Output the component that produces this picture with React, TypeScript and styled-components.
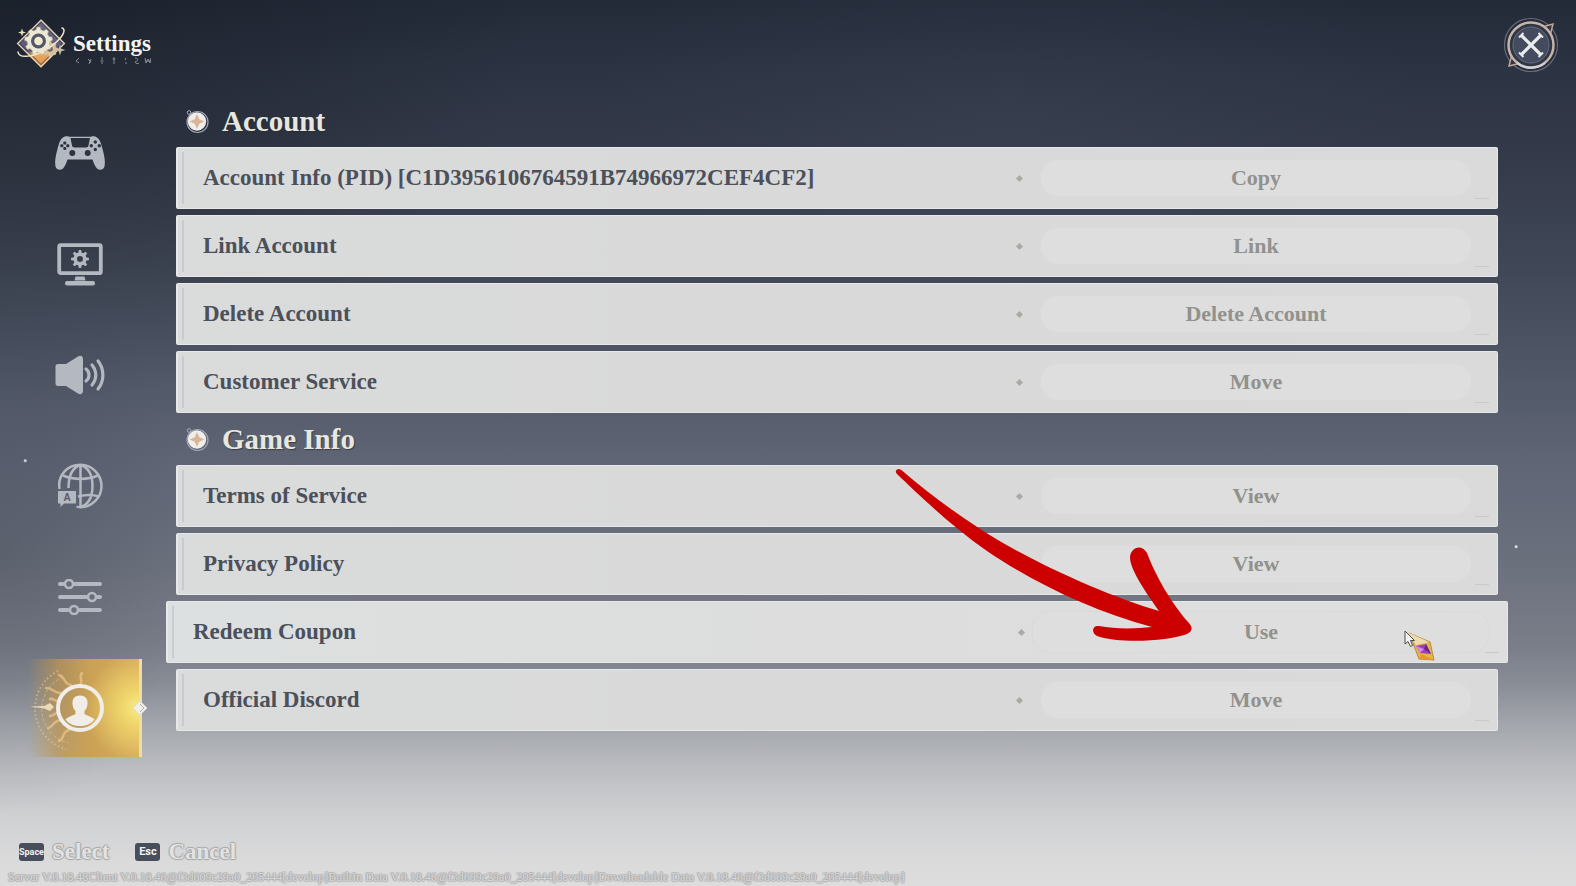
import React, { useState } from 'react';
import styled, { createGlobalStyle, css } from 'styled-components';

const serif = '"Liberation Serif", "Times New Roman", serif';

const GlobalStyle = createGlobalStyle`
  *, *::before, *::after { box-sizing: border-box; }
  body { margin: 0; font-family: ${serif}; }
  button { font: inherit; color: inherit; background: none; border: 0; padding: 0; cursor: pointer; }
  h1, h2, p { margin: 0; }
`;

const Page = styled.div`
  position: relative;
  min-height: 100vh;
  display: flex;
  flex-direction: column;
  overflow: hidden;
  background:
    radial-gradient(circle at 1.6% 52%, #c9ccd0 0, #c9ccd0 1px, rgba(201, 204, 208, 0) 2px),
    radial-gradient(circle at 96.2% 61.7%, #d5d7da 0, #d5d7da 1px, rgba(213, 215, 218, 0) 2px),
    radial-gradient(ellipse 34% 46% at 0% 0%, rgba(16, 20, 26, 0.42), rgba(16, 20, 26, 0)),
    radial-gradient(ellipse 26% 22% at 64% 12%, rgba(96, 108, 130, 0.12), rgba(96, 108, 130, 0)),
    radial-gradient(ellipse 12% 30% at 0% 62%, rgba(50, 54, 66, 0.25), rgba(50, 54, 66, 0)),
    linear-gradient(180deg, #232a38 0%, #2c3342 8%, #343a49 18%, #414857 31%, #505767 42%, #5f6575 52%, #6c717e 64%, #7a7e89 73%, #888c95 77%, #a4a7ad 82%, #bcbec2 87%, #ced0d2 92%, #dadadb 97%, #dddddd 100%);
`;

const Header = styled.header`
  display: flex;
  align-items: center;
  justify-content: space-between;
  height: 90px;
  padding: 0 16px;
`;

const Brand = styled.div`
  display: flex;
  align-items: center;
  gap: 7px;
  padding-bottom: 4px;
`;

const TitleBlock = styled.div`
  display: flex;
  flex-direction: column;
  gap: 1px;
  padding-top: 10px;
`;

const Title = styled.h1`
  font-size: 23px;
  line-height: 24px;
  font-weight: 700;
  color: #f4f4f2;
`;

const CloseButton = styled.button`
  display: block;
  width: 58px;
  height: 58px;
`;

const Body = styled.div`
  display: flex;
  padding-top: 5px;
`;

const Nav = styled.nav`
  flex: none;
  display: flex;
  flex-direction: column;
  gap: 13px;
  width: 176px;
  padding: 9px 0 0 18px;
`;

const NavButton = styled.button<{ $active?: boolean }>`
  position: relative;
  display: flex;
  align-items: center;
  justify-content: center;
  width: 124px;
  height: 98px;
  color: #b4b8c1;
  ${({ $active }) =>
    $active &&
    css`
      color: #f1eee9;
      border-right: 3px solid #f0dca6;
      padding-left: 3px;
      background:
        radial-gradient(circle at 100% 50%, #f6ee84 0%, rgba(245, 222, 110, 0.8) 14%, rgba(240, 205, 100, 0) 42%),
        linear-gradient(90deg, rgba(190, 150, 80, 0) 8%, rgba(190, 150, 80, 0.75) 34%, #cba155 60%, #d6ab5c 100%);
    `}
`;

const ActiveArt = styled.svg`
  position: absolute;
  left: 12px;
  top: 4px;
  width: 90px;
  height: 90px;
`;

const ActiveMarker = styled.svg`
  position: absolute;
  right: -9px;
  top: 41px;
  width: 16px;
  height: 16px;
`;

const Icon = styled.svg`
  position: relative;
  display: block;
`;

const Main = styled.main`
  flex: 1;
  min-width: 0;
  padding-right: 78px;
`;

const SectionHeading = styled.h2`
  display: flex;
  align-items: center;
  gap: 12px;
  height: 52px;
  padding-left: 9px;
  font-size: 29px;
  line-height: 32px;
  font-weight: 700;
  color: #e6e7df;
  text-shadow: 1px 1px 1px rgba(40, 44, 52, 0.7);
`;

const Rows = styled.div`
  display: flex;
  flex-direction: column;
  gap: 6px;
`;

const Row = styled.div<{ $active?: boolean }>`
  position: relative;
  display: flex;
  align-items: center;
  gap: ${({ $active }) => ($active ? 8 : 18)}px;
  height: 62px;
  margin: 0 ${({ $active }) => ($active ? -10 : 0)}px;
  padding: 0 ${({ $active }) => ($active ? 17 : 25)}px 0 25px;
  border: 1px solid #e6e8ea;
  border-left-width: 2px;
  border-radius: 2px;
  background: ${({ $active }) =>
    $active
      ? 'linear-gradient(90deg, #dde0e0, #dcdddc 50%, #dedede)'
      : 'linear-gradient(90deg, #dadbdb, #d8d9d8 50%, #dadada)'};

  &::before {
    content: '';
    position: absolute;
    left: 4px;
    top: 4px;
    bottom: 4px;
    width: 2px;
    background: #c9cbd2;
  }

  &::after {
    content: '';
    position: absolute;
    right: 8px;
    bottom: 9px;
    width: 14px;
    height: 1px;
    background: #c9c9c7;
  }
`;

const RowLabel = styled.span`
  flex: 1;
  min-width: 0;
  font-size: 23px;
  line-height: 28px;
  font-weight: 700;
  color: #4b505b;
  white-space: nowrap;
`;

const Dot = styled.i`
  flex: none;
  width: 5px;
  height: 5px;
  background: #aaaaa5;
  transform: rotate(45deg);
`;

const ActionButton = styled.button<{ $active?: boolean }>`
  flex: none;
  width: ${({ $active }) => ($active ? 458 : 432)}px;
  height: ${({ $active }) => ($active ? 42 : 38)}px;
  border: 1px solid #d9dad9;
  border-radius: 18px;
  background: #dedede;
  font-size: 22px;
  line-height: 26px;
  font-weight: 700;
  color: #91918d;
`;

const Arrow = styled.svg`
  position: absolute;
  right: 312px;
  top: -136px;
  width: 304px;
  height: 180px;
  z-index: 2;
  pointer-events: none;
`;

const Cursor = styled.svg`
  position: absolute;
  right: 70px;
  top: 27px;
  width: 34px;
  height: 34px;
  z-index: 2;
  pointer-events: none;
`;

const Footer = styled.footer`
  margin-top: auto;
  padding: 0 8px 1px;
`;

const Hints = styled.div`
  display: flex;
  gap: 26px;
  padding: 0 11px;
`;

const Hint = styled.button`
  display: flex;
  align-items: center;
  gap: 8px;
  font-size: 23px;
  line-height: 26px;
  font-weight: 700;
  color: #e2e2e2;
  text-shadow: 1px 0 1px #a6a6a6, -1px 0 1px #a6a6a6, 0 1px 1px #a6a6a6, 0 -1px 1px #a6a6a6;
`;

const Key = styled.kbd<{ $long?: boolean }>`
  display: flex;
  align-items: center;
  justify-content: center;
  width: 25px;
  height: 18px;
  border-radius: 3px;
  background: #484e5b;
  color: #f3f3f3;
  font: 700 ${({ $long }) => ($long ? 9 : 11)}px/18px Roboto, Arial, sans-serif;
  text-shadow: none;
`;

const Version = styled.p`
  padding-top: 4px;
  font-size: 12px;
  line-height: 16px;
  color: #d8d8d8;
  white-space: nowrap;
  text-shadow: 1px 0 1px #ababab, -1px 0 1px #ababab, 0 1px 1px #ababab, 0 -1px 1px #ababab;
`;

const gearPath = (cx: number, cy: number, outer: number, inner: number, teeth: number) => {
  const step = (Math.PI * 2) / teeth;
  const at = (r: number, a: number) => `${(cx + r * Math.sin(a)).toFixed(2)} ${(cy - r * Math.cos(a)).toFixed(2)}`;
  let d = '';
  for (let i = 0; i < teeth; i++) {
    const a = i * step;
    d += `${i ? 'L' : 'M'}${at(inner, a - step * 0.3)}L${at(outer, a - step * 0.17)}L${at(outer, a + step * 0.17)}L${at(inner, a + step * 0.3)}`;
  }
  return d + 'Z';
};

const Emblem = () => (
  <svg width="50" height="50" viewBox="0 0 50 50" aria-hidden="true">
    <defs>
      <linearGradient id="emblem" x1="0" y1="0" x2="0" y2="1">
        <stop offset="0" stopColor="#6b6d82" />
        <stop offset="0.66" stopColor="#57597a" />
        <stop offset="0.72" stopColor="#e9a85e" />
        <stop offset="1" stopColor="#d9964d" />
      </linearGradient>
    </defs>
    <path d="M25 2 48.500 25.500 25 49 1.500 25.500Z" fill="url(#emblem)" stroke="#e8d7b6" strokeWidth="1.200" />
    <path d="M25 4.500 46 25.500 25 46.500 4 25.500Z" fill="none" stroke="#3a3444" strokeWidth="0.800" />
    <path d={gearPath(34, 31, 8, 6.4, 8)} fill="#d9c19a" />
    <circle cx="34" cy="31" r="2.800" fill="#6d6570" />
    <path d={gearPath(22.5, 23, 14, 11.4, 9)} fill="#ece8d6" stroke="#b7a98c" strokeWidth="0.600" />
    <circle cx="22.500" cy="23" r="7.500" fill="#55576b" />
    <circle cx="22.500" cy="23" r="4.300" fill="#efebcd" />
    <path d="M2 34C3 41 18 39 31 31S52 12 46 10" fill="none" stroke="#ede2c8" strokeWidth="1.500" strokeLinecap="round" />
    <path d="M6 10.500 7 13.500 10 14.500 7 15.500 6 18.500 5 15.500 2 14.500 5 13.500Z" fill="#eadfb9" />
    <path d="M44 26.500 45.300 30.700 49.500 32 45.300 33.300 44 37.500 42.700 33.300 38.500 32 42.700 30.700Z" fill="#c9bda4" />
  </svg>
);

const Runes = () => (
  <svg width="78" height="8" viewBox="0 0 78 8" fill="none" stroke="#868a94" strokeWidth="1" aria-hidden="true">
    <path d="M6 1 3 4 6 6M15 2l2 2-1 3M18 2l-1 4M29 0v3M29 5v2M27.500 4h3M41 0v7M39.500 2h3M53 1l-1 2M53 5v2M62 1c4 0 3 3 0 4 1 2 3 2 4 1M72 1l1 5 2-4 2 4 1-5M72 4h6" />
  </svg>
);

const CloseIcon = () => (
  <svg width="58" height="58" viewBox="0 0 58 58" aria-hidden="true">
    <circle cx="29" cy="29" r="26.500" fill="#232936" fillOpacity="0.500" stroke="#6b6a76" strokeWidth="1.200" />
    <path d="M40 11 51 8 48 20ZM7 50 10 38 19 47Z" fill="#3a3440" stroke="#b9a79c" strokeWidth="1.500" />
    <circle cx="29" cy="29" r="22.500" fill="#2f3644" stroke="#c4b4aa" strokeWidth="2.500" />
    <path d="M15 47A22.500 22.500 0 0 0 43 47" fill="none" stroke="#cfd4dc" strokeWidth="2.200" />
    <circle cx="29" cy="29" r="18" fill="#444b5e" stroke="#666c7d" strokeWidth="1" />
    <path d="M19 19 39 39M39 19 19 39" stroke="#e9ecec" strokeWidth="3.200" />
    <path d="M17 21.500 21.500 17M36.500 17 41 21.500M17 36.500 21.500 41M41 36.500 36.500 41" stroke="#e9ecec" strokeWidth="2" />
  </svg>
);

const SectionIcon = () => (
  <svg width="25" height="26" viewBox="0 0 25 26" aria-hidden="true">
    <circle cx="12.500" cy="14" r="10.500" fill="none" stroke="#9fa5b2" strokeWidth="1.200" />
    <circle cx="12" cy="13.500" r="9.200" fill="#f0eeea" />
    <path d="M12 6 14.200 11.300 19.500 13.500 14.200 15.700 12 21 9.800 15.700 4.500 13.500 9.800 11.300Z" fill="#d8b498" />
    <circle cx="4" cy="4.500" r="1.800" fill="none" stroke="#a9adb8" />
  </svg>
);

const ControllerIcon = () => (
  <Icon width="52" height="36" viewBox="0 0 52 36" aria-hidden="true">
    <path
      fill="currentColor"
      fillRule="evenodd"
      d="M9 2.500C11 1 13.500 1 15 1.700H37C38.500 1 41 1 43 2.500 45.500 4 47 8 48.500 14 50.500 21 51.500 27 50.500 31.500 49.500 35 46 35.500 43.500 34 41 31.500 39.500 27.500 38.500 24.500H13.500C12.500 27.500 11 31.500 8.500 34 6 35.500 2.500 35 1.500 31.500 0.500 27 1.500 21 3.500 14 5 8 6.500 4 9 2.500ZM16.500 3 18 10.500C18.300 11.800 19 12.500 20.500 12.500H32C33.500 12.500 34.200 11.800 34.500 10.500L36 3Z"
    />
    <g fill="#2d3442">
      <circle cx="18.300" cy="18" r="3" />
      <circle cx="33.700" cy="18" r="3" />
      <rect x="9.300" y="6.500" width="3" height="3" rx="1" />
      <rect x="9.300" y="12" width="3" height="3" rx="1" />
      <rect x="6.300" y="9.300" width="3" height="3" rx="1" />
      <rect x="12.300" y="9.300" width="3" height="3" rx="1" />
      <circle cx="41.300" cy="7" r="1.700" />
      <circle cx="41.300" cy="14.500" r="1.700" />
      <circle cx="37.300" cy="10.800" r="1.700" />
      <circle cx="45.300" cy="10.800" r="1.700" />
    </g>
  </Icon>
);

const DisplayIcon = () => (
  <Icon width="46" height="44" viewBox="0 0 46 44" aria-hidden="true">
    <rect x="2.200" y="3.200" width="41.600" height="28" rx="1.500" fill="none" stroke="currentColor" strokeWidth="3.800" />
    <path d="M18.500 34.500h9l1 4h-11Z" fill="currentColor" />
    <rect x="8" y="39" width="30" height="4.500" rx="2" fill="currentColor" />
    <path fill="currentColor" fillRule="evenodd" d={`${gearPath(23, 17, 9, 6.6, 8)}M26 17a3 3 0 1 0-6 0 3 3 0 0 0 6 0Z`} />
  </Icon>
);

const SoundIcon = () => (
  <Icon width="50" height="40" viewBox="0 0 50 40" aria-hidden="true">
    <path d="M3 9H11L23 1.500C25.500 0 28 1 28 4V36C28 39 25.500 40 23 38.500L11 31H3C1.500 31 .5 30 .5 28.500V11.500C.5 10 1.500 9 3 9Z" fill="currentColor" />
    <g fill="none" stroke="currentColor" strokeWidth="3.200" strokeLinecap="round">
      <path d="M31 14C35 17 35 23 31 26" />
      <path d="M37 10C42 16 42 24 37 30" />
      <path d="M43 6C49.500 14 49.500 26 43 34" />
    </g>
  </Icon>
);

const LanguageLetter = styled.text`
  font: 700 10px "Liberation Sans", Arial, sans-serif;
`;

const LanguageIcon = () => (
  <Icon width="46" height="46" viewBox="0 0 46 46" aria-hidden="true">
    <g fill="none" stroke="currentColor" strokeWidth="2.500">
      <path d="M2.600 26C0 12 11 1.800 23.500 1.800 35 1.800 44.500 11.500 44.500 23S35 44.200 23.500 44.200C22 44.200 20.500 44 19.500 43.500" />
      <path d="M23.500 2V44M23.500 2C33 5 35.500 14 35.500 23S33 41 23.500 44M23.500 2C14 5 11.500 14 11.500 25M6 12.500C16 17 31 17 41 12.500M21 33.500C29 31.500 36 31.500 42 33.500" />
    </g>
    <path d="M1 28H19V40.500H7L3.500 44V40.500H1Z" fill="currentColor" />
    <LanguageLetter x="10" y="38" textAnchor="middle" fill="#565d6a">A</LanguageLetter>
  </Icon>
);

const OptionsIcon = () => (
  <Icon width="44" height="36" viewBox="0 0 44 36" fill="none" stroke="currentColor" aria-hidden="true">
    <g strokeWidth="4" strokeLinecap="round">
      <path d="M2 5H5M17 5H42M2 18H28M40 18H42M2 31H10M22 31H42" />
    </g>
    <g strokeWidth="2.600">
      <circle cx="11" cy="5" r="4" />
      <circle cx="34" cy="18" r="4" />
      <circle cx="16" cy="31" r="4" />
    </g>
  </Icon>
);

const AccountIcon = () => (
  <Icon width="50" height="50" viewBox="0 0 50 50" aria-hidden="true">
    <circle cx="25" cy="25" r="22" fill="none" stroke="currentColor" strokeWidth="4" />
    <path d="M25 12.500C30.500 12.500 33 16 32.500 21 32.200 24.500 31 26.500 29.500 28V31C32.500 33 37 33.500 39.500 36.500 35.500 41.500 30.500 43 25 43S14.500 41.500 10.500 36.500C13 33.500 17.500 33 20.500 31V28C19 26.500 17.800 24.500 17.500 21 17 16 19.500 12.500 25 12.500Z" fill="currentColor" />
  </Icon>
);

const SunArt = () => (
  <ActiveArt viewBox="0 0 90 90" fill="none" aria-hidden="true">
    <g stroke="#e6cf9f" strokeOpacity="0.55">
      <path d="M28 8A42 42 0 0 0 36 86" strokeWidth="2" strokeDasharray="1.500 2.500" />
      <path d="M33 14A35 35 0 0 0 38 80" strokeWidth="1" strokeDasharray="3 2" />
    </g>
    <path d="M0 43.500 14 43 20 40 24 44 20 48 14 45.500Z" fill="#f3e2b8" fillOpacity="0.9" />
    <g fill="none" stroke="#efc48a" strokeOpacity="0.7" strokeWidth="2.500" strokeLinecap="round">
      <path d="M16 25C22 24 24 31 32 30" />
      <path d="M18 65C23 65 22 58 31 57" />
      <path d="M29 12C36 14 33 21 41 22" />
      <path d="M29 78C35 76 31 69 39 67" />
      <path d="M52 10C48 14 54 17 50 22" />
      <path d="M20 36C24 35 25 39 29 38M20 53C24 53 25 49 29 50" />
    </g>
  </ActiveArt>
);

const Marker = () => (
  <ActiveMarker viewBox="0 0 16 16" aria-hidden="true">
    <path d="M8 1 15 8 8 15 1 8Z" fill="#efeee9" stroke="#dcdcd8" />
    <path d="M8 4 12 8 8 12" fill="none" stroke="#b4b0a6" />
  </ActiveMarker>
);

const PointerArrow = () => (
  <Arrow viewBox="0 0 304 180" aria-hidden="true">
    <path
      fill="#cc0000"
      d="M5.500 4C7 2.500 9 3 11 4.500C45 34 85 62 121 82C170 109 225 132 268 145C257 129 240 106 239 92C239 82 250 77 256 87C262 103 276 132 297 156C302 161 302 165 296 168C277 175 230 178 206 170C200 167 201 159 208 160C224 163 243 163 261 161C200 145 140 115 96 85C60 60 28 29 6 8C4.500 6.500 4.500 5 5.500 4Z"
    />
  </Arrow>
);

const GemCursor = () => (
  <Cursor viewBox="0 0 34 34" aria-hidden="true">
    <path d="M6 4 27 13 31 31 16 30Z" fill="#e3b64b" stroke="#b98a3a" strokeWidth="1" />
    <path d="M4 3 26 13 13 16Z" fill="#ecdcae" />
    <path d="M31 31 16 30 18 25Z" fill="#e8972e" />
    <path d="M13 17 23 15 28 25 17 24Z" fill="#9a3fc0" />
    <path d="M13 17 21 20 17 24Z" fill="#d78ae6" />
    <path d="M23 15 21 20 28 25Z" fill="#6a2394" />
    <path d="M2 2V15L5 12.500 7.500 17.500 9.500 16.500 7.500 11.500H11.500Z" fill="#f4f4f4" stroke="#4c4c50" strokeWidth="1" />
  </Cursor>
);

const tabs = [
  { name: 'Controls', icon: ControllerIcon },
  { name: 'Display', icon: DisplayIcon },
  { name: 'Sound', icon: SoundIcon },
  { name: 'Language', icon: LanguageIcon },
  { name: 'Options', icon: OptionsIcon },
  { name: 'Account', icon: AccountIcon },
];

const sections = [
  {
    title: 'Account',
    rows: [
      { label: 'Account Info (PID) [C1D3956106764591B74966972CEF4CF2]', action: 'Copy' },
      { label: 'Link Account', action: 'Link' },
      { label: 'Delete Account', action: 'Delete Account' },
      { label: 'Customer Service', action: 'Move' },
    ],
  },
  {
    title: 'Game Info',
    rows: [
      { label: 'Terms of Service', action: 'View' },
      { label: 'Privacy Policy', action: 'View' },
      { label: 'Redeem Coupon', action: 'Use' },
      { label: 'Official Discord', action: 'Move' },
    ],
  },
];

export default function App() {
  const [tab, setTab] = useState('Account');
  return (
    <Page>
      <GlobalStyle />
      <Header>
        <Brand>
          <Emblem />
          <TitleBlock>
            <Title>Settings</Title>
            <Runes />
          </TitleBlock>
        </Brand>
        <CloseButton aria-label="Close">
          <CloseIcon />
        </CloseButton>
      </Header>
      <Body>
        <Nav aria-label="Settings categories">
          {tabs.map(({ name, icon: TabIcon }) => (
            <NavButton key={name} aria-label={name} $active={tab === name} onClick={() => setTab(name)}>
              {tab === name && <SunArt />}
              <TabIcon />
              {tab === name && <Marker />}
            </NavButton>
          ))}
        </Nav>
        <Main>
          {sections.map((section) => (
            <section key={section.title}>
              <SectionHeading>
                <SectionIcon />
                {section.title}
              </SectionHeading>
              <Rows>
                {section.rows.map(({ label, action }) => {
                  const active = label === 'Redeem Coupon';
                  const id = label.split(' (')[0].replace(/ /g, '-').toLowerCase();
                  return (
                    <Row key={label} $active={active}>
                      <RowLabel id={id}>{label}</RowLabel>
                      <Dot />
                      <ActionButton $active={active} aria-describedby={id}>
                        {action}
                      </ActionButton>
                      {active && <PointerArrow />}
                      {active && <GemCursor />}
                    </Row>
                  );
                })}
              </Rows>
            </section>
          ))}
        </Main>
      </Body>
      <Footer>
        <Hints>
          <Hint>
            <Key $long>Space</Key>
            Select
          </Hint>
          <Hint>
            <Key>Esc</Key>
            Cancel
          </Hint>
        </Hints>
        <Version>
          Server V.0.18.48Client V.0.18.46@f3d609c29a0_205444[develop]BuiltIn Data V.0.18.46@f3d609c29a0_205444[develop]Downloadable Data V.0.18.46@f3d609c29a0_205444[develop]
        </Version>
      </Footer>
    </Page>
  );
}
